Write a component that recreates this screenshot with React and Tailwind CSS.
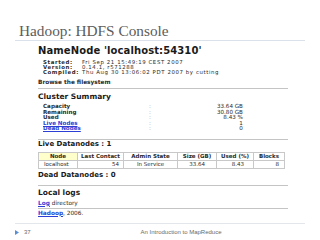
export default function App() {
  const sans = "font-['DejaVu_Sans',sans-serif]";
  const cols = [
    { w: "w-[39px]", h: "Node", d: "localhost", da: "justify-start pl-[5px]", hb: "bg-[#ffffcc]" },
    { w: "w-[46px]", h: "Last Contact", d: "54", da: "justify-end pr-[4px]", hb: "" },
    { w: "w-[54px]", h: "Admin State", d: "In Service", da: "justify-center", hb: "" },
    { w: "w-[39px]", h: "Size (GB)", d: "33.64", da: "justify-end pr-[11px]", hb: "" },
    { w: "w-[37px]", h: "Used (%)", d: "8.43", da: "justify-end pr-[9px]", hb: "" },
    { w: "w-[31px]", h: "Blocks", d: "8", da: "justify-end pr-[5px]", hb: "" },
  ];
  const summary = [
    ["Capacity", "33.64 GB", false],
    ["Remaining", "30.80 GB", false],
    ["Used", "8.43 %", false],
    ["Live Nodes", "1", true],
    ["Dead Nodes", "0", true],
  ];
  return (
    <div className="w-[320px] h-[240px] bg-white overflow-hidden flex flex-col">
      <div className="h-[22px] shrink-0" />
      <div className="h-[18px] shrink-0 pl-[19px] flex items-center text-[15.3px] leading-[18px] text-[#5c5c5c] font-['Liberation_Serif',serif]">
        Hadoop: HDFS Console
      </div>
      <div className="h-px mx-[15px] bg-[#dbe1ea] shrink-0" />
      <div className={`pl-[38px] pr-[32px] flex flex-col text-[#1a1a1a] ${sans}`}>
        <div className="h-[19px] flex items-center text-[10px] font-bold leading-none tracking-[0.1px]">
          NameNode 'localhost:54310'
        </div>
        {[
          ["Started:", "Fri Sep 21 15:49:19 CEST 2007"],
          ["Version:", "0.14.1, r571288"],
          ["Compiled:", "Thu Aug 30 13:06:02 PDT 2007 by cutting"],
        ].map(([l, v]) => (
          <div key={l} className="h-[5px] flex items-center text-[5.4px] leading-[5px] tracking-[0.6px] pl-[5px] text-[#2a2a2a]">
            <span className="w-[39px] font-bold">{l}</span>
            <span>{v}</span>
          </div>
        ))}
        <div className="h-[6px] mt-[5px] flex items-center text-[5.8px] font-bold leading-none text-[#2a2a2a]">
          Browse the filesystem
        </div>
        <div className="h-px mt-[2px] bg-[#c4c4c4]" />
        <div className="h-[15px] flex items-center text-[7.5px] font-bold leading-none">
          Cluster Summary
        </div>
        {summary.map(([l, v, link]) => (
          <div key={l} className="h-[5.5px] flex items-center text-[5.6px] leading-[5.5px] pl-[5px] text-[#2a2a2a]">
            <span className={`w-[106px] font-bold ${link ? "text-[#2b3fd6] underline" : ""}`}>{l}</span>
            <span className="text-[#aaa]">:</span>
            <span className="w-[92px] text-right">{v}</span>
          </div>
        ))}
        <div className="h-px mt-[7.5px] bg-[#c4c4c4]" />
        <div className="h-[8px] flex items-center text-[7px] font-bold leading-none">
          Live Datanodes : 1
        </div>
        <div className="mt-[4px] flex flex-col w-fit border-l border-t border-[#c8c8c8] text-[5.5px] leading-none text-[#2a2a2a]">
          <div className="flex">
            {cols.map((c) => (
              <div key={c.h} className={`${c.w} ${c.hb} h-[8px] flex items-center justify-center font-bold border-r border-b border-[#c8c8c8]`}>
                {c.h}
              </div>
            ))}
          </div>
          <div className="flex">
            {cols.map((c) => (
              <div key={c.h} className={`${c.w} ${c.da} h-[8px] flex items-center border-r border-b border-[#c8c8c8]`}>
                {c.d}
              </div>
            ))}
          </div>
        </div>
        <div className="h-[12px] flex items-center text-[7px] font-bold leading-none">
          Dead Datanodes : 0
        </div>
        <div className="h-px mt-[4px] bg-[#c4c4c4]" />
        <div className="h-[14px] flex items-center text-[7.5px] font-bold leading-none">
          Local logs
        </div>
        <div className="h-[7px] flex items-center text-[5.8px] leading-none text-[#2a2a2a]">
          <span className="text-[#2b3fd6] underline font-bold">Log</span>
          <span className="ml-[2px]">directory</span>
        </div>
        <div className="h-px mt-px bg-[#c4c4c4]" />
        <div className="h-[9px] flex items-center text-[5.8px] leading-none text-[#2a2a2a]">
          <span className="text-[#2b3fd6] underline font-bold">Hadoop</span>
          <span>, 2006.</span>
        </div>
      </div>
      <div className="h-px mt-[5px] mx-[15px] bg-[#e3e6ea] shrink-0" />
      <div className="h-[16px] flex items-center relative font-['Liberation_Sans',sans-serif] text-[6px] text-[#6a6a6a] leading-none">
        <svg className="ml-[15px]" width="4" height="5" viewBox="0 0 4 5">
          <polygon points="0,0 4,2.5 0,5" fill="#5b8fd0" />
        </svg>
        <span className="ml-[5px]">37</span>
        <span className="absolute left-0 right-0 text-center pl-[42px]">An Introduction to MapReduce</span>
      </div>
    </div>
  );
}
